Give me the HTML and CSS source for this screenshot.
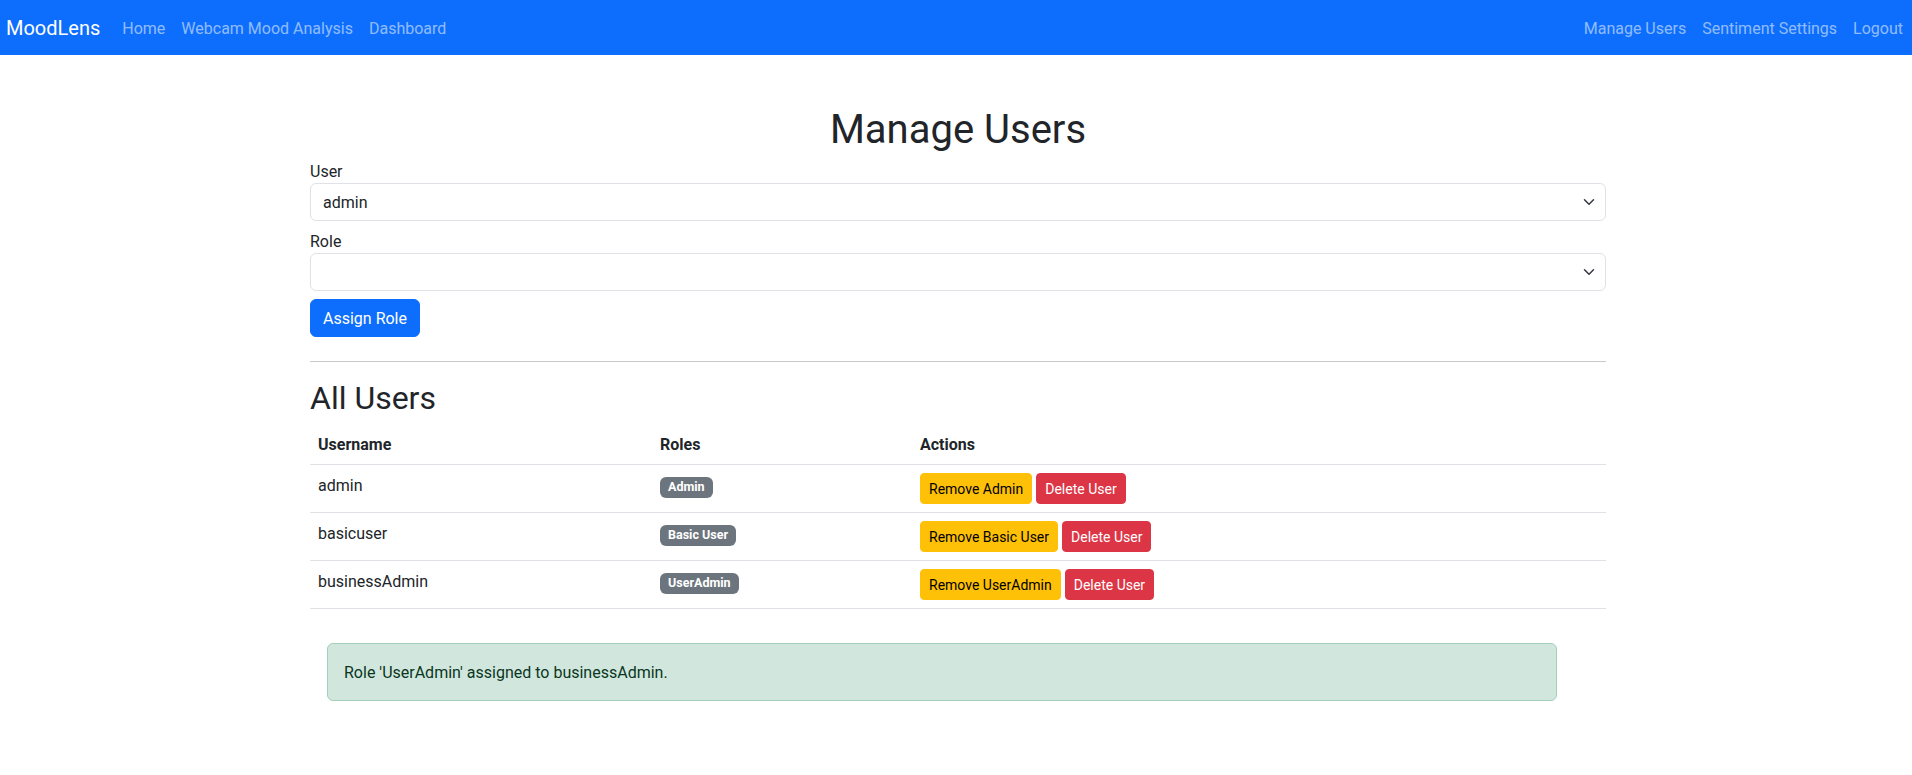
FILE: index.html
```html
<!DOCTYPE html>
<html lang="en">
<head>
<meta charset="utf-8">
<title>Manage Users - MoodLens</title>
<link rel="stylesheet" href="styles.css">
</head>
<body>
<nav class="navbar">
  <div class="nav-group">
    <a class="brand" href="#">MoodLens</a>
    <ul class="nav-links">
      <li><a href="#">Home</a></li>
      <li><a href="#">Webcam Mood Analysis</a></li>
      <li><a href="#">Dashboard</a></li>
    </ul>
  </div>
  <ul class="nav-links">
    <li><a href="#">Manage Users</a></li>
    <li><a href="#">Sentiment Settings</a></li>
    <li><a href="#">Logout</a></li>
  </ul>
</nav>

<div class="page">
  <main class="container">
    <h1 class="page-title">Manage Users</h1>

    <form class="assign-form">
      <div class="field">
        <label class="field-label">User</label>
        <div class="select">
          <span class="select-value">admin</span>
          <svg class="chevron" viewBox="0 0 16 16" width="16" height="12" aria-hidden="true"><path fill="none" stroke="#343a40" stroke-linecap="round" stroke-linejoin="round" stroke-width="2" d="m2 5 6 6 6-6"/></svg>
        </div>
      </div>
      <div class="field">
        <label class="field-label">Role</label>
        <div class="select">
          <span class="select-value"></span>
          <svg class="chevron" viewBox="0 0 16 16" width="16" height="12" aria-hidden="true"><path fill="none" stroke="#343a40" stroke-linecap="round" stroke-linejoin="round" stroke-width="2" d="m2 5 6 6 6-6"/></svg>
        </div>
      </div>
      <button type="button" class="btn btn-primary">Assign Role</button>
    </form>

    <hr class="divider">

    <h2 class="section-title">All Users</h2>

    <table class="users-table">
      <thead>
        <tr>
          <th class="col-user">Username</th>
          <th class="col-roles">Roles</th>
          <th>Actions</th>
        </tr>
      </thead>
      <tbody>
        <tr>
          <td>admin</td>
          <td><span class="badge">Admin</span></td>
          <td><div class="actions"><button type="button" class="btn btn-sm btn-warning">Remove Admin</button><button type="button" class="btn btn-sm btn-danger">Delete User</button></div></td>
        </tr>
        <tr>
          <td>basicuser</td>
          <td><span class="badge">Basic User</span></td>
          <td><div class="actions"><button type="button" class="btn btn-sm btn-warning">Remove Basic User</button><button type="button" class="btn btn-sm btn-danger">Delete User</button></div></td>
        </tr>
        <tr>
          <td>businessAdmin</td>
          <td><span class="badge">UserAdmin</span></td>
          <td><div class="actions"><button type="button" class="btn btn-sm btn-warning">Remove UserAdmin</button><button type="button" class="btn btn-sm btn-danger">Delete User</button></div></td>
        </tr>
      </tbody>
    </table>

    <div class="alert">Role 'UserAdmin' assigned to businessAdmin.</div>
  </main>
</div>
</body>
</html>
```

FILE: styles.css
```css
* {
  box-sizing: border-box;
}

body {
  margin: 0;
  font-family: Roboto, "Noto Sans", "Liberation Sans", sans-serif;
  font-size: 16px;
  line-height: 1.5;
  color: #212529;
  background: #fff;
}

/* Navbar */
.navbar {
  display: flex;
  align-items: center;
  justify-content: space-between;
  height: 55px;
  padding: 0 1px 0 6px;
  background: #0d6efd;
}

.nav-group {
  display: flex;
  align-items: center;
}

.brand {
  font-size: 20px;
  line-height: 30px;
  color: #fff;
  text-decoration: none;
  margin-right: 14px;
}

.nav-links {
  display: flex;
  list-style: none;
  margin: 0;
  padding: 0;
}

.nav-links a {
  display: block;
  padding: 9px 8px 7px;
  color: rgba(255, 255, 255, 0.55);
  text-decoration: none;
}

/* Page */
.page {
  padding-left: 4px;
}

.container {
  width: 1296px;
  margin: 0 auto;
}

.page-title {
  margin: 48px 0 5px;
  padding-top: 3px;
  font-size: 40px;
  font-weight: 400;
  line-height: 1.2;
  text-align: center;
}

.field {
  margin-bottom: 8px;
}

.field-label {
  display: block;
  line-height: 24px;
  padding-top: 1px;
  margin-bottom: -1px;
}

.select {
  display: flex;
  align-items: center;
  justify-content: space-between;
  height: 38px;
  padding: 6px 12px;
  border: 1px solid #dee2e6;
  border-radius: 6px;
  background: #fff;
}

.select-value {
  line-height: 24px;
  padding-top: 2px;
}

.chevron {
  display: block;
  margin-right: -4px;
}

/* Buttons */
.btn {
  display: inline-block;
  font-family: inherit;
  font-size: 16px;
  line-height: 24px;
  padding: 7px 12px 5px;
  border: 1px solid transparent;
  border-radius: 6px;
  cursor: pointer;
}

.btn-primary {
  background: #0d6efd;
  border-color: #0d6efd;
  color: #fff;
}

.btn-sm {
  font-size: 14px;
  line-height: 21px;
  padding: 5px 8px 3px;
  border-radius: 4px;
}

.btn-warning {
  background: #ffc107;
  border-color: #ffc107;
  color: #000;
}

.btn-danger {
  background: #dc3545;
  border-color: #dc3545;
  color: #fff;
}

.divider {
  margin: 24px 0 16px;
  border: 0;
  border-top: 1px solid rgba(33, 37, 41, 0.25);
}

.section-title {
  margin: 0 0 8px;
  padding-top: 2px;
  font-size: 32px;
  font-weight: 400;
  line-height: 36px;
}

/* Table */
.users-table {
  width: 100%;
  border-collapse: collapse;
  margin-bottom: 0;
}

.users-table th,
.users-table td {
  padding: 9px 8px 7px;
  text-align: left;
  vertical-align: top;
  border-bottom: 1px solid #dee2e6;
}

.users-table td:last-child {
  padding-top: 8px;
  padding-bottom: 8px;
}

.users-table th {
  font-weight: 700;
}

.col-user {
  width: 342px;
}

.col-roles {
  width: 260px;
}

.badge {
  display: inline-block;
  padding: 4px 8px;
  font-size: 12.5px;
  font-weight: 700;
  line-height: 1;
  color: #fff;
  background: #6c757d;
  border-radius: 6px;
}

.actions {
  display: flex;
  gap: 4px;
}

/* Alert */
.alert {
  margin: 34px 49px 0 17px;
  padding: 17px 16px 15px;
  border: 1px solid #a3cfbb;
  border-radius: 6px;
  background: #d1e7dd;
  color: #0a3622;
}
```
